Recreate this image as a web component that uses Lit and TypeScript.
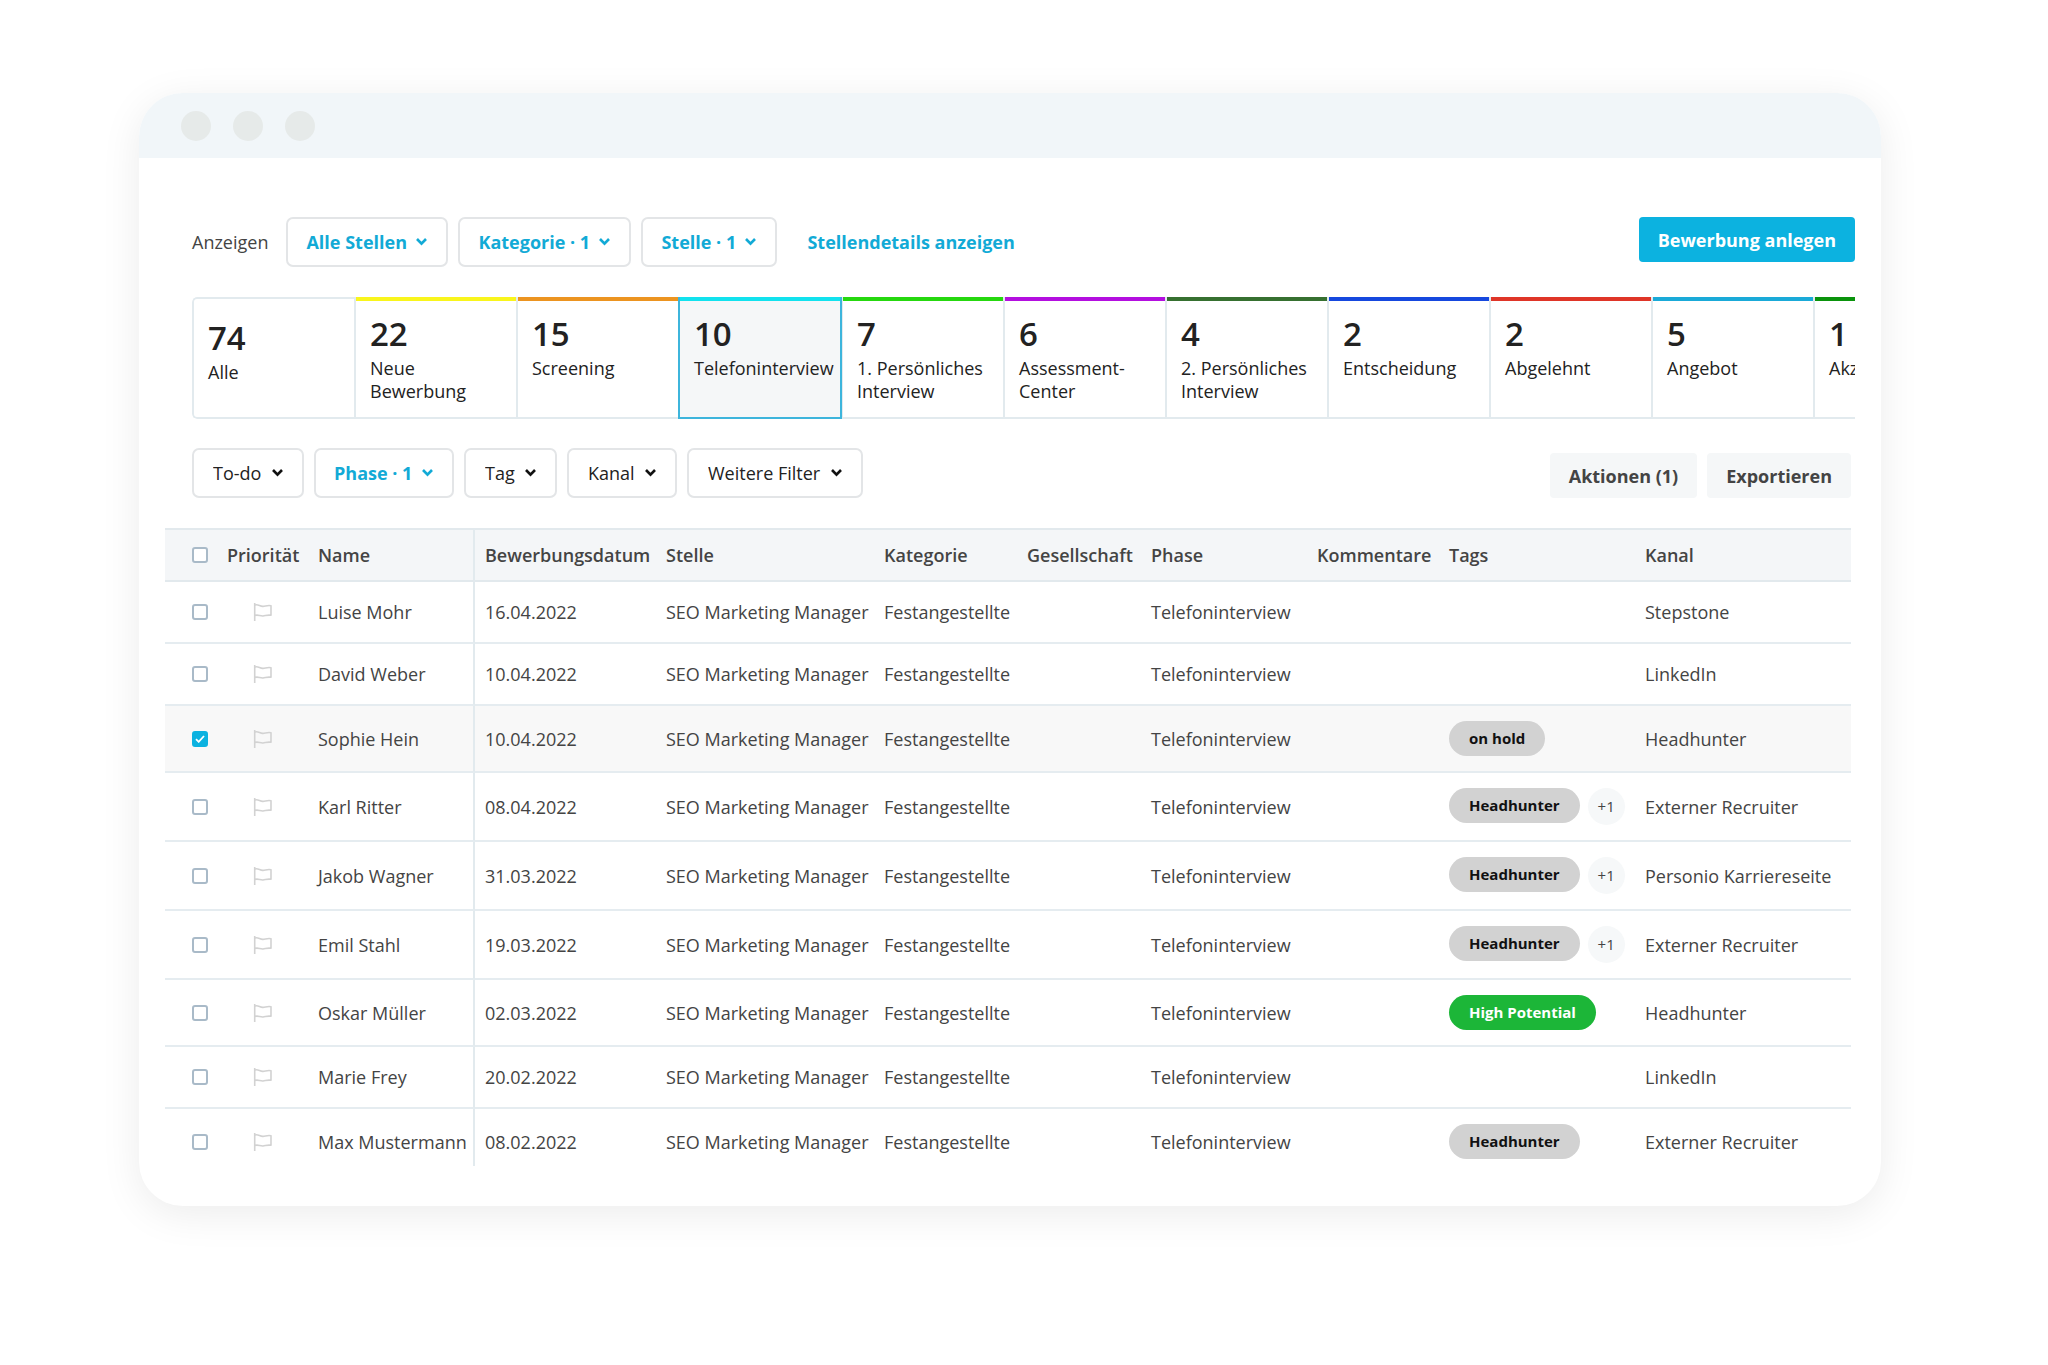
import { LitElement, html, css, svg, nothing } from "lit";
import { customElement, property, state } from "lit/decorators.js";
import { classMap } from "lit/directives/class-map.js";
import { styleMap } from "lit/directives/style-map.js";

interface Phase {
  count: number;
  label: string;
  color?: string;
}

interface Tag {
  label: string;
  tone: "grey" | "green";
  more?: number;
}

interface Applicant {
  name: string;
  date: string;
  channel: string;
  tag?: Tag;
}

const PHASES: Phase[] = [
  { count: 74, label: "Alle" },
  { count: 22, label: "Neue Bewerbung", color: "#f9f51c" },
  { count: 15, label: "Screening", color: "#ec9420" },
  { count: 10, label: "Telefoninterview", color: "#12e2ee" },
  { count: 7, label: "1. Persönliches Interview", color: "#26d80f" },
  { count: 6, label: "Assessment-Center", color: "#b30fdf" },
  { count: 4, label: "2. Persönliches Interview", color: "#367030" },
  { count: 2, label: "Entscheidung", color: "#1648de" },
  { count: 2, label: "Abgelehnt", color: "#df3528" },
  { count: 5, label: "Angebot", color: "#1aaad8" },
  { count: 1, label: "Akzeptiert", color: "#0a930c" },
];

const HEADHUNTER: Tag = { label: "Headhunter", tone: "grey" };

const APPLICANTS: Applicant[] = [
  { name: "Luise Mohr", date: "16.04.2022", channel: "Stepstone" },
  { name: "David Weber", date: "10.04.2022", channel: "LinkedIn" },
  { name: "Sophie Hein", date: "10.04.2022", channel: "Headhunter", tag: { label: "on hold", tone: "grey" } },
  { name: "Karl Ritter", date: "08.04.2022", channel: "Externer Recruiter", tag: { ...HEADHUNTER, more: 1 } },
  { name: "Jakob Wagner", date: "31.03.2022", channel: "Personio Karriereseite", tag: { ...HEADHUNTER, more: 1 } },
  { name: "Emil Stahl", date: "19.03.2022", channel: "Externer Recruiter", tag: { ...HEADHUNTER, more: 1 } },
  { name: "Oskar Müller", date: "02.03.2022", channel: "Headhunter", tag: { label: "High Potential", tone: "green" } },
  { name: "Marie Frey", date: "20.02.2022", channel: "LinkedIn" },
  { name: "Max Mustermann", date: "08.02.2022", channel: "Externer Recruiter", tag: HEADHUNTER },
];

@customElement("filter-select")
class FilterSelect extends LitElement {
  @property() label = "";
  @property({ type: Boolean }) active = false;

  static styles = css`
    :host {
      display: block;
    }
    .field {
      display: grid;
      align-items: center;
      color: #222;
    }
    .select {
      grid-area: 1 / 1;
      appearance: none;
      box-sizing: border-box;
      height: 50px;
      margin: 0;
      padding: 0 40px 0 19px;
      border: 2px solid #e3e5e7;
      border-radius: 7px;
      background: #fff;
      color: inherit;
      font: 400 18px "Open Sans", sans-serif;
      cursor: pointer;
    }
    .chevron {
      grid-area: 1 / 1;
      justify-self: end;
      margin-right: 20px;
      pointer-events: none;
      color: #111;
    }
    .active,
    .active .chevron {
      color: #12aad6;
    }
    .active .select {
      padding: 0 39px 0 18px;
      font-weight: 700;
    }
  `;

  render() {
    return html`
      <label class=${classMap({ field: true, active: this.active })}>
        <select class="select" aria-label=${this.label}>
          <option>${this.label}</option>
        </select>
        <svg class="chevron" width="13" height="10" viewBox="0 0 13 10" fill="none" aria-hidden="true">
          <path d="M2 2l4.5 4.7L11 2" stroke="currentColor" stroke-width="2.6" />
        </svg>
      </label>
    `;
  }
}

@customElement("check-box")
class CheckBox extends LitElement {
  @property() label = "";
  @property({ type: Boolean }) checked = false;

  static styles = css`
    :host {
      display: block;
    }
    .box {
      display: grid;
      width: 16px;
      height: 16px;
    }
    .input {
      grid-area: 1 / 1;
      appearance: none;
      box-sizing: border-box;
      width: 16px;
      height: 16px;
      margin: 0;
      border: 2px solid #a9bac8;
      border-radius: 3px;
      background: #fff;
    }
    .input:checked {
      border-color: #0cb2e0;
      background: #0cb2e0;
    }
    .mark {
      grid-area: 1 / 1;
      place-self: center;
      visibility: hidden;
      pointer-events: none;
    }
    .input:checked + .mark {
      visibility: visible;
    }
  `;

  render() {
    return html`
      <label class="box">
        <input class="input" type="checkbox" aria-label=${this.label} .checked=${this.checked} />
        <svg class="mark" width="10" height="8" viewBox="0 0 10 8" fill="none" aria-hidden="true">
          <path d="M1 4.2L3.7 6.8L9 1" stroke="#fff" stroke-width="1.8" />
        </svg>
      </label>
    `;
  }
}

@customElement("phase-strip")
class PhaseStrip extends LitElement {
  @state() private selected = 3;

  static styles = css`
    :host {
      display: flex;
      overflow: hidden;
      font-family: "Open Sans", sans-serif;
      border-radius: 5px 0 0 5px;
    }
    .phase {
      box-sizing: border-box;
      flex: 0 0 162px;
      display: grid;
      grid-template-rows: 4px auto 1fr;
      height: 122px;
      padding: 0;
      border: solid #e2eaee;
      border-width: 0 0 2px 2px;
      background: #fff;
      color: #222;
      font: inherit;
      text-align: left;
      cursor: pointer;
    }
    .plain {
      border-top-width: 2px;
      border-radius: 5px 0 0 5px;
      grid-template-rows: 6px auto 1fr;
    }
    .selected {
      flex-basis: 164px;
      margin-right: -1px;
      z-index: 1;
      border: solid #3db5dc;
      border-width: 0 2px 2px 2px;
      background: #f5f7f8;
    }
    .bar {
      display: block;
    }
    .count {
      padding: 12px 0 2px 14px;
      font-size: 33px;
      line-height: 42px;
      font-weight: 600;
    }
    .label {
      padding: 0 4px 0 14px;
      font-size: 18px;
      line-height: 23px;
    }
  `;

  render() {
    return PHASES.map(
      (phase, index) => html`
        <button
          class=${classMap({ phase: true, plain: !phase.color, selected: index === this.selected })}
          aria-pressed=${index === this.selected}
          @click=${() => (this.selected = index)}
        >
          <span class="bar" style=${styleMap({ background: phase.color ?? "transparent" })}></span>
          <span class="count">${phase.count}</span>
          <span class="label">${phase.label}</span>
        </button>
      `,
    );
  }
}

@customElement("applicant-table")
class ApplicantTable extends LitElement {
  static styles = css`
    :host {
      display: block;
      overflow: hidden;
      font-family: "Open Sans", sans-serif;
    }
    .table {
      width: 100%;
      table-layout: fixed;
      border-collapse: separate;
      border-spacing: 0;
      color: #444;
      font-size: 18px;
      line-height: 24px;
    }
    .col-check { width: 52px; }
    .col-priority { width: 91px; }
    .col-name { width: 167px; }
    .col-date { width: 181px; }
    .col-job { width: 218px; }
    .col-category { width: 143px; }
    .col-company { width: 124px; }
    .col-phase { width: 166px; }
    .col-comments { width: 132px; }
    .col-tags { width: 196px; }
    .head {
      height: 54px;
      box-sizing: border-box;
      padding: 0 0 0 10px;
      border-top: 2px solid #e2e9ed;
      border-bottom: 2px solid #e2e9ed;
      background: #f4f6f8;
      text-align: left;
      font-weight: 600;
      white-space: nowrap;
    }
    .cell {
      height: 62px;
      box-sizing: border-box;
      padding: 15px 0 15px 10px;
      border-bottom: 2px solid #e5ecf0;
      white-space: nowrap;
    }
    .row:last-child .cell {
      border-bottom-color: transparent;
    }
    .checked .cell {
      background: #f8f8f8;
    }
    .check {
      padding-left: 27px;
    }
    .name {
      border-right: 2px solid #e2eaee;
    }
    .flag {
      display: block;
      margin-left: 26px;
    }
    .tags {
      display: flex;
      align-items: flex-start;
      gap: 8px;
    }
    .tag {
      padding: 0 20px;
      border-radius: 18px;
      font-size: 15px;
      line-height: 35px;
      font-weight: 700;
    }
    .grey {
      background: #d2d2d2;
      color: #111;
    }
    .green {
      background: #1cb638;
      color: #fff;
    }
    .more {
      width: 37px;
      border-radius: 50%;
      background: #f6f8f9;
      font-size: 15px;
      line-height: 37px;
      text-align: center;
    }
  `;

  private renderFlag() {
    return html`<svg class="flag" width="20" height="20" viewBox="0 0 20 20" fill="none" role="img" aria-label="Priorität">
      ${svg`<path d="M1.7 1v18M1.7 3.2c3-1.6 5.2 1.4 8.3 1.2 2.6-.2 4.5-1.4 8-.7v9.6c-3.5-.7-5.4.5-8 .7-3.1.2-5.3-1.8-8.3-.4" stroke="#d2d2d2" stroke-width="1.6" stroke-linejoin="round"/>`}
    </svg>`;
  }

  private renderTag(tag: Tag) {
    return html`
      <div class="tags">
        <span class="tag ${tag.tone}">${tag.label}</span>
        ${tag.more ? html`<span class="more">+${tag.more}</span>` : nothing}
      </div>
    `;
  }

  render() {
    return html`
      <table class="table">
        <colgroup>
          <col class="col-check" />
          <col class="col-priority" />
          <col class="col-name" />
          <col class="col-date" />
          <col class="col-job" />
          <col class="col-category" />
          <col class="col-company" />
          <col class="col-phase" />
          <col class="col-comments" />
          <col class="col-tags" />
          <col />
        </colgroup>
        <thead>
          <tr>
            <th class="head check"><check-box label="Alle auswählen"></check-box></th>
            <th class="head">Priorität</th>
            <th class="head name">Name</th>
            <th class="head">Bewerbungsdatum</th>
            <th class="head">Stelle</th>
            <th class="head">Kategorie</th>
            <th class="head">Gesellschaft</th>
            <th class="head">Phase</th>
            <th class="head">Kommentare</th>
            <th class="head">Tags</th>
            <th class="head">Kanal</th>
          </tr>
        </thead>
        <tbody>
          ${APPLICANTS.map((a, index) => {
            const checked = index === 2;
            return html`
              <tr class=${classMap({ row: true, checked })}>
                <td class="cell check"><check-box label=${a.name} ?checked=${checked}></check-box></td>
                <td class="cell">${this.renderFlag()}</td>
                <td class="cell name">${a.name}</td>
                <td class="cell">${a.date}</td>
                <td class="cell">SEO Marketing Manager</td>
                <td class="cell">Festangestellte</td>
                <td class="cell"></td>
                <td class="cell">Telefoninterview</td>
                <td class="cell"></td>
                <td class="cell">${a.tag ? this.renderTag(a.tag) : nothing}</td>
                <td class="cell">${a.channel}</td>
              </tr>
            `;
          })}
        </tbody>
      </table>
    `;
  }
}

@customElement("app-root")
class AppRoot extends LitElement {
  static styles = css`
    :host {
      display: block;
      box-sizing: border-box;
      min-height: 100vh;
      padding: 93px 167px 93px 139px;
      background: #fff;
      font-family: "Open Sans", sans-serif;
      font-size: 18px;
    }
    .window {
      overflow: hidden;
      padding-bottom: 40px;
      border-radius: 44px;
      background: #fff;
      box-shadow: 0 8px 40px rgba(0, 0, 0, 0.08);
    }
    .titlebar {
      display: flex;
      align-items: center;
      gap: 22px;
      height: 65px;
      padding-left: 42px;
      background: #f1f6f9;
    }
    .dot {
      width: 30px;
      height: 30px;
      border-radius: 50%;
      background: #e6eae9;
    }
    .bar {
      display: flex;
      align-items: center;
      gap: 10px;
      padding: 0 26px 0 53px;
    }
    .jobs {
      padding-top: 59px;
      align-items: flex-start;
    }
    .caption {
      padding-right: 8px;
      line-height: 50px;
      color: #444;
    }
    .link {
      padding-left: 20px;
      line-height: 50px;
      color: #12aad6;
      font-weight: 700;
      text-decoration: none;
    }
    .button {
      height: 45px;
      padding: 0 19px;
      border: 0;
      border-radius: 4px;
      background: #f5f7f8;
      color: #444;
      font: 700 18px "Open Sans", sans-serif;
      cursor: pointer;
    }
    .push {
      margin-left: auto;
    }
    .primary {
      background: #0cb2e0;
      color: #fff;
    }
    .phases {
      margin: 30px 26px 29px 53px;
    }
    .filters {
      align-items: flex-end;
      padding-right: 30px;
      margin-bottom: 30px;
    }
    .applicants {
      height: 638px;
      margin: 0 30px 0 26px;
    }
  `;

  render() {
    return html`
      <main class="window">
        <div class="titlebar">
          <span class="dot"></span>
          <span class="dot"></span>
          <span class="dot"></span>
        </div>
        <div class="bar jobs">
          <span class="caption">Anzeigen</span>
          <filter-select label="Alle Stellen" active></filter-select>
          <filter-select label="Kategorie · 1" active></filter-select>
          <filter-select label="Stelle · 1" active></filter-select>
          <a class="link" href="#details">Stellendetails anzeigen</a>
          <button class="button primary push">Bewerbung anlegen</button>
        </div>
        <phase-strip class="phases"></phase-strip>
        <div class="bar filters">
          <filter-select label="To-do"></filter-select>
          <filter-select label="Phase · 1" active></filter-select>
          <filter-select label="Tag"></filter-select>
          <filter-select label="Kanal"></filter-select>
          <filter-select label="Weitere Filter"></filter-select>
          <button class="button push">Aktionen (1)</button>
          <button class="button">Exportieren</button>
        </div>
        <applicant-table class="applicants"></applicant-table>
      </main>
    `;
  }
}
